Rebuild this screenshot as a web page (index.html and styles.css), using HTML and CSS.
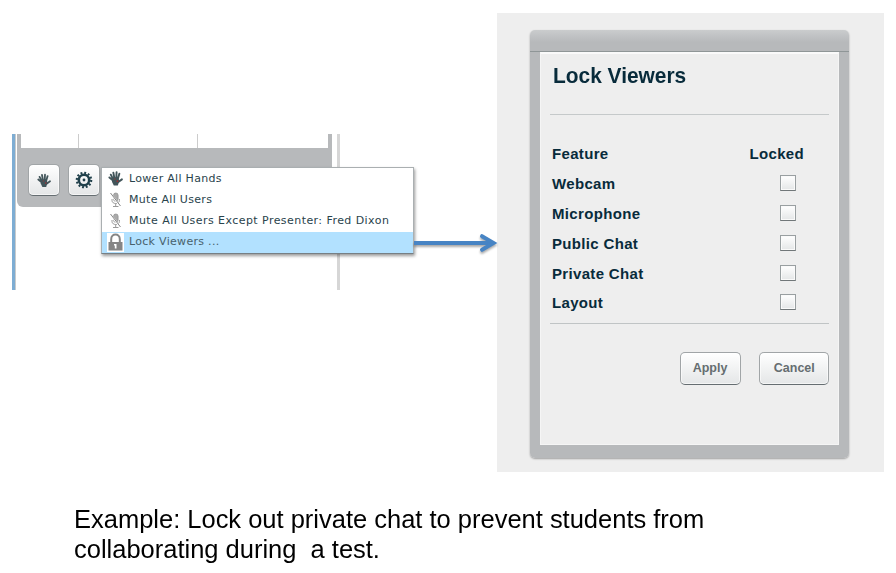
FILE: index.html
```html
<!DOCTYPE html>
<html lang="en">
<head>
<meta charset="utf-8">
<title>Lock Viewers</title>
<link rel="stylesheet" href="styles.css">
</head>
<body>
<svg class="defs" aria-hidden="true">
  <defs>
    <symbol id="hand" viewBox="0 0 14 14">
      <g fill="none" stroke="#42555a" stroke-linecap="round" stroke-width="1.8">
        <path d="M5 8 2.6 3.4M6 7 5 1.5M7.7 7 8 1.2M9 8 10.6 2.6M9.3 10.5 13 7.8M5 9 1.3 6"/>
      </g>
      <path d="M4 7.5 5.5 6H9.5l1 3-1.3 4.6H5.4L3.7 10z" fill="#42555a"/>
      <circle cx="6.4" cy="7.4" r=".7" fill="#853f40"/><circle cx="8.8" cy="9.5" r=".8" fill="#a02d31"/>
    </symbol>
    <symbol id="mic" viewBox="0 0 12 16">
      <rect x="4" y="1" width="4.6" height="8.4" rx="2.3" fill="#aaa" stroke="#8c8c8c" stroke-width=".7"/>
      <path d="M2.5 7v1.5c0 4 7.4 4 7.4 0V7M6.2 11.5V14M3.5 14.5h5.5" fill="none" stroke="#999"/>
      <path d="M1 1.5 10.5 14" stroke="#fff" stroke-width="2"/><path d="M1 1 11 14" stroke="#777" stroke-width=".9"/>
    </symbol>
  </defs>
</svg>
<main class="slide">
  <div class="top">
    <section class="users">
      <div class="panel">
        <div class="list"><i class="c1"></i><i class="c2"></i></div>
        <div class="tools">
          <button class="tool"><svg width="14" height="15"><use href="#hand"/></svg></button>
          <button class="tool"><svg width="18" height="18" viewBox="0 0 18 18">
            <g fill="none" stroke="#20404b"><circle cx="9" cy="9" r="7.2" stroke-width="2.2" stroke-dasharray="1.9 1.87"/><circle cx="9" cy="9" r="5.2" stroke-width="2.6"/></g><circle cx="9" cy="9" r="1.4" fill="#20404b"/>
          </svg></button>
        </div>
      </div>
      <ul class="menu">
        <li><svg width="14" height="15"><use href="#hand"/></svg><span>Lower All Hands</span></li>
        <li><svg width="12" height="16"><use href="#mic"/></svg><span>Mute All Users</span></li>
        <li><svg width="12" height="16"><use href="#mic"/></svg><span class="long">Mute All Users Except Presenter: Fred Dixon</span></li>
        <li class="active"><svg class="lock" width="17" height="19" viewBox="0 0 17 19"><path fill="#fff" d="M0 0h17v19H0z"/><path d="M4.2 9V6.2c0-6.2 8.6-6.2 8.6 0V9" fill="none" stroke="#858585" stroke-width="2"/><path d="M1.5 9h14v8.500h-14z" fill="#858585"/><path d="M7 11h2.500v4.500H7.800v-3H7z" fill="#fff"/></svg><span>Lock Viewers ...</span></li>
      </ul>
      <svg class="arrow" width="90" height="28" viewBox="0 0 90 28"><g fill="none" stroke="#4784c4" stroke-width="4"><path d="M0 13h77"/><path d="M68 6.200 79.500 13 68 19.800" stroke-width="4" stroke-linecap="round"/></g></svg>
    </section>
    <section class="backdrop">
      <div class="dialog">
        <div class="content">
          <h1><span>Lock Viewers</span></h1>
          <div class="rows">
            <div class="row"><span>Feature</span><span class="locked">Locked</span></div>
            <div class="row"><span>Webcam</span><i class="check"></i></div>
            <div class="row"><span>Microphone</span><i class="check"></i></div>
            <div class="row"><span>Public Chat</span><i class="check"></i></div>
            <div class="row"><span>Private Chat</span><i class="check"></i></div>
            <div class="row"><span>Layout</span><i class="check"></i></div>
          </div>
          <div class="actions"><button class="apply"><span>Apply</span></button><button class="cancel"><span>Cancel</span></button></div>
        </div>
      </div>
    </section>
  </div>
  <p class="caption"><span>Example: Lock out private chat to prevent students from</span><br><span>collaborating during&nbsp; a test.</span></p>
</main>
</body>
</html>
```
FILE: styles.css
```css
* { box-sizing: border-box; }
body { margin: 0; background: #fff; font-family: "Liberation Sans", Arial, sans-serif; overflow: hidden; }
.defs { position: absolute; width: 0; height: 0; }
.slide { width: 896px; height: 573px; padding-top: 13px; }
.top { display: flex; height: 459px; }
.users { position: relative; width: 328px; height: 156px; margin: 121px 157px 0 12px; border-left: 3px solid #7eadd3; border-right: 3px solid #d6d6d6; box-shadow: inset 1px 0 #c9cbcc; padding-left: 2px; }
.panel { width: 315px; height: 73px; background: #b7b9bb; border-radius: 0 0 4px 6px; padding-left: 4px; }
.list { width: 307px; height: 14px; background: #fff; display: flex; }
.list i { border-right: 1px solid #ccc; }
.c1 { width: 58px; }
.c2 { width: 119px; }
.tools { display: flex; gap: 9px; padding: 16px 0 0 7px; }
button { font: inherit; padding: 0; display: flex; align-items: center; justify-content: center; border: 1px solid #a1a5a7; border-bottom-color: #656d71; border-radius: 5px; background: linear-gradient(#fff, #e4e6e7); box-shadow: inset 0 0 0 1px #fff9; }
.tool { width: 32px; height: 32px; margin-right: -1px; }
.menu { position: absolute; left: 86px; top: 33px; width: 313px; height: 87px; margin: 0; padding: 0; list-style: none; background: #fff; border: 1px solid #aaafb1; border-bottom-color: #777f84; box-shadow: 1px 2px 3px #0006; font: 11px/21px "DejaVu Sans", sans-serif; color: #29434c; letter-spacing: .3px; }
.menu li { height: 21.2px; display: flex; align-items: center; }
.menu li > svg { flex: none; width: 27px; }
.menu .active { background: #b2e1ff; color: #47606b; }
.menu li > .lock { width: 17px; margin: 0 5px; }
.menu span { white-space: nowrap; position: relative; top: -.5px; }
.menu .active span { top: -1px; }
.menu .long { letter-spacing: .44px; }
.arrow { position: absolute; left: 399px; top: 96px; filter: drop-shadow(0 2px 1px #0005); }
.backdrop { width: 387px; height: 459px; background: #eee; padding: 17px 0 0 33px; }
.dialog { width: 319px; height: 428px; border-radius: 5px; padding: 21px 11px 13px; background: linear-gradient(#cacccd 0, #b7b9bb 12px, #b7b9bb 21px, #8f9697 21px, #8f9697 22px, #b7b9bb 22px); box-shadow: 0 1px 2px #0005; }
.content { height: 393px; background: #eee; padding: 0 9px; border: 1px solid #f5f5f5; border-top: 2px solid #fafafa; margin: 1px -1px 0; color: #082b3b; }
h1 { margin: 0 0 24px; height: 61px; border-bottom: 1px solid #c5c9ca; font-size: 22px; line-height: 44px; padding-left: 3px; }
h1 span { display: inline-block; transform: scaleX(.95); transform-origin: left; }
.rows { border-bottom: 1px solid #c0c4c5; height: 185px; font-size: 15px; font-weight: bold; padding-left: 2px; letter-spacing: .33px; }
.row { display: flex; justify-content: space-between; align-items: center; height: 29.8px; padding-right: 25px; }
.check { width: 16px; height: 16px; margin-right: 8px; border: 1px solid #999fa1; border-bottom-color: #717779; background: linear-gradient(#fff, #e4e6e7); box-shadow: inset 0 0 0 1px #fafafa; position: relative; top: -.5px; }
.actions { display: flex; justify-content: flex-end; gap: 18px; margin-top: 28px; }
.actions button { height: 33px; font-size: 13px; font-weight: bold; color: #656d70; }
.actions span { display: inline-block; transform: translateY(-1px) scaleX(.96); }
.actions .apply { width: 61px; }
.actions .cancel { width: 70px; }
.caption { margin: 32px 0 0 74px; font-size: 26px; line-height: 30px; white-space: nowrap; color: #000; }
.caption span { display: inline-block; transform: scaleX(.98); transform-origin: left; }
```
